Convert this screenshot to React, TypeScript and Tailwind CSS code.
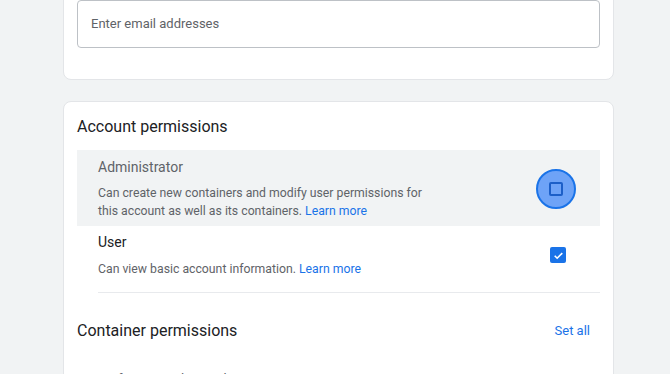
export default function App() {
  return (
    <div className="h-[374px] overflow-hidden bg-[#f1f3f4] font-['Roboto',sans-serif] pl-[63px] pr-[56px] text-[#202124]">
      <div className="-mt-[11px] rounded-lg border border-[#e3e5e8] bg-white px-[13px] pb-[31px] pt-[10px]">
        <div className="flex h-[48px] items-center rounded border border-[#bdc1c6] px-[13px] text-[13px] text-[#5f6368]">
          Enter email addresses
        </div>
      </div>

      <div className="mt-[21px] rounded-lg border border-[#e3e5e8] bg-white px-[13px] pt-[13px]">
        <h2 className="text-[16px] leading-[24px] text-[#202124]">Account permissions</h2>

        <div className="mt-[11px] flex items-center bg-[#f1f3f4] pb-[6px] pl-[21px] pr-[24px] pt-[7px]">
          <div className="flex-1">
            <div className="text-[14px] leading-[20px] text-[#5f6368]">Administrator</div>
            <p className="mt-[7px] text-[12.25px] leading-[18px] text-[#5f6368]">
              Can create new containers and modify user permissions for
              <br />
              this account as well as its containers.{' '}
              <span className="text-[#1a73e8]">Learn more</span>
            </p>
          </div>
          <div className="flex h-[40px] w-[40px] items-center justify-center rounded-full border-2 border-[#1a73e8] bg-[#6ea3f7]">
            <div className="h-[14px] w-[14px] rounded-[2px] border-2 border-[#1c5fc8]" />
          </div>
        </div>

        <div className="ml-[21px] flex items-center border-b border-[#e8eaed] pb-[14px] pr-[34px] pt-[6px]">
          <div className="flex-1">
            <div className="text-[14px] leading-[20px] text-[#202124]">User</div>
            <p className="mt-[8px] text-[12.25px] leading-[18px] text-[#5f6368]">
              Can view basic account information.{' '}
              <span className="text-[#1a73e8]">Learn more</span>
            </p>
          </div>
          <div className="flex h-[16px] w-[16px] items-center justify-center rounded-[2px] bg-[#1a73e8]">
            <svg viewBox="0 0 24 24" className="h-[13px] w-[13px]" fill="none" stroke="white" strokeWidth="3">
              <path d="M5 12.5l4.5 4.5L19 7.5" />
            </svg>
          </div>
        </div>

        <div className="mt-[26px] flex items-center justify-between pr-[10px]">
          <h2 className="text-[16px] leading-[24px] text-[#202124]">Container permissions</h2>
          <span className="text-[13px] text-[#1a73e8]">Set all</span>
        </div>

        <div className="mt-[26px] flex justify-between pl-[21px] pr-[24px] text-[13px] leading-[20px] text-[#5f6368]">
          <span>Prof. Martin Silvan Vidaurre Lara · GTM-MJTH9SZ</span>
          <span>No access</span>
        </div>
      </div>
    </div>
  );
}
